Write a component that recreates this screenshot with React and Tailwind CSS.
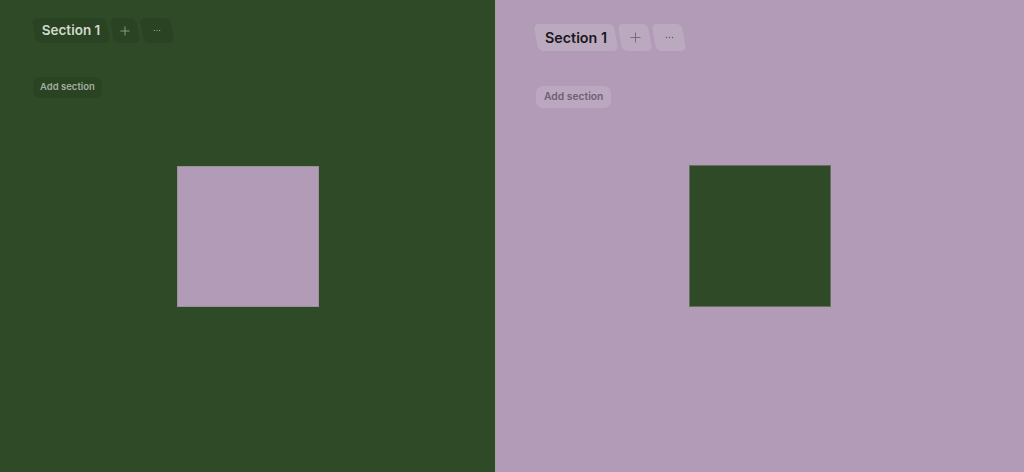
const GREEN = "bg-[#2f4a27]";

function Plus({ className }) {
  return (
    <svg viewBox="0 0 12 12" className={className} fill="none" stroke="currentColor" strokeWidth="1" strokeLinecap="round">
      <path d="M6 1v10M1 6h10" />
    </svg>
  );
}

function Dots({ className }) {
  return (
    <svg viewBox="0 0 12 4" className={className} fill="currentColor">
      <circle cx="2" cy="2" r="0.9" />
      <circle cx="6" cy="2" r="0.9" />
      <circle cx="10" cy="2" r="0.9" />
    </svg>
  );
}

function TabBg({ color, children, className = "" }) {
  return (
    <div className={`relative flex items-center justify-center ${className}`}>
      <div className={`absolute inset-0 rounded-[5px] skew-x-[10deg] ${color}`} />
      <span className="relative flex items-center">{children}</span>
    </div>
  );
}

export default function App() {
  return (
    <div className="flex w-[1024px] h-[472px] overflow-hidden font-['Inter',sans-serif]">
      {/* left panel */}
      <div className={`grid w-[495px] shrink-0 h-full ${GREEN}`}>
        <div className="[grid-area:1/1] flex flex-col pl-[34px] pt-[18px]">
          <div className="flex gap-[4px] h-[25px]">
            <TabBg color="bg-[#2a4323]" className="w-[74px] text-[#d2d8cd] text-[13.5px] font-semibold">Section 1</TabBg>
            <TabBg color="bg-[#2a4323]" className="w-[26px] text-[#9aa895]">
              <Plus className="w-[10px] h-[10px]" />
            </TabBg>
            <TabBg color="bg-[#2a4323]" className="w-[30px] text-[#b8c2b3]">
              <Dots className="w-[8px] h-[3px]" />
            </TabBg>
          </div>
          <div className="mt-[34px] -ml-[1px] self-start h-[21px] px-[7px] rounded-[7px] bg-[#2a4323] text-[#a3ae9f] text-[9.5px] font-semibold flex items-center">
            Add section
          </div>
        </div>
        <div className="[grid-area:1/1] flex items-center justify-center">
          <div className="w-[142px] h-[141px] bg-[#b19bb7] border border-[#8a8a8a]/60" />
        </div>
      </div>
      <div className="w-px shrink-0 h-full bg-[#a3a3a3]" />
      {/* right panel */}
      <div className="grid flex-1 min-w-0 h-full bg-[#b19bb7]">
        <div className="[grid-area:1/1] flex flex-col pl-[40px] pt-[24px]">
          <div className="flex gap-[4px] h-[27px]">
            <TabBg color="bg-[#bba9c0]" className="w-[80px] text-[#1c171d] text-[14.3px] font-semibold">Section 1</TabBg>
            <TabBg color="bg-[#bba9c0]" className="w-[30px] text-[#74667a]">
              <Plus className="w-[11px] h-[11px]" />
            </TabBg>
            <TabBg color="bg-[#bba9c0]" className="w-[30px] text-[#5e5263]">
              <Dots className="w-[9px] h-[3px]" />
            </TabBg>
          </div>
          <div className="mt-[35px] self-start h-[22px] px-[8px] rounded-[7px] bg-[#bba8c0] text-[#6d6172] text-[10.3px] font-semibold flex items-center">
            Add section
          </div>
        </div>
        <div className="[grid-area:1/1] flex items-center justify-center">
          <div className="w-[142px] h-[142px] bg-[#2f4a27] border border-[#8a8a8a]/60" />
        </div>
      </div>
    </div>
  );
}
